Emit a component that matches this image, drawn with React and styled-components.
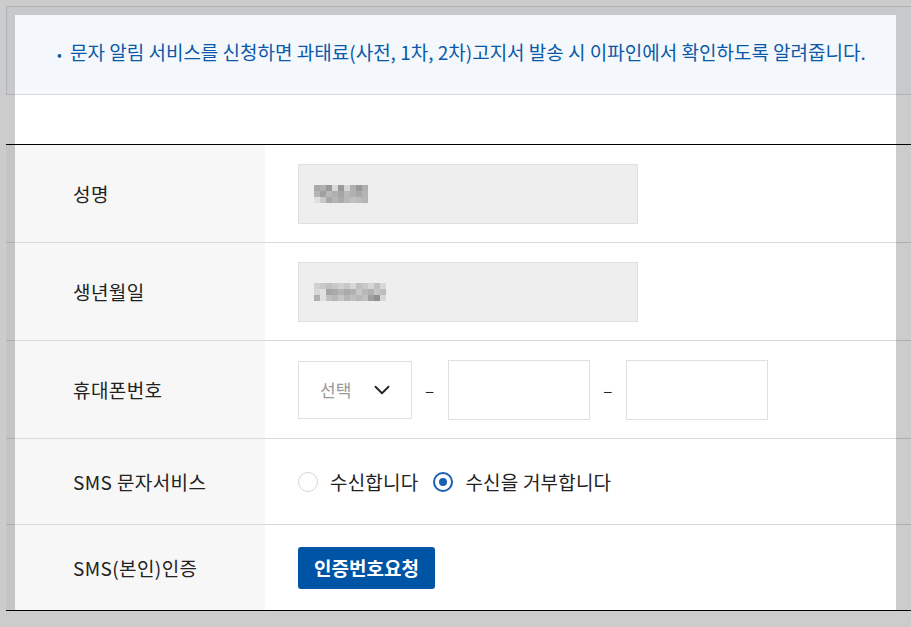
import React from "react";
import styled, { createGlobalStyle } from "styled-components";
import { ChevronDown } from "lucide-react";

const Global = createGlobalStyle`
  html, body { margin: 0; padding: 0; }
  body {
    background: #cccccc;
    overflow: hidden;
    font-family: "Noto Sans CJK KR", "Noto Sans", sans-serif;
    color: #222;
  }
`;

const Page = styled.div`
  position: relative;
  width: 911px;
  height: 627px;
  padding: 15px 0 0 15px;
  box-sizing: border-box;
`;

const Frame = styled.div`
  position: absolute;
  top: 6px;
  left: 6px;
  width: 940px;
  height: 89px;
  box-sizing: border-box;
  border: 1px solid rgba(0, 20, 60, 0.13);
  border-right: none;
  background: rgba(0, 40, 100, 0.015);
  pointer-events: none;
`;

const Card = styled.div`
  width: 881px;
  background: #fff;
`;

const InfoBox = styled.div`
  height: 80px;
  box-sizing: border-box;
  background: #f8fbff;
  display: flex;
  align-items: center;
  padding: 0 0 8px 42px;
`;

const InfoText = styled.p`
  margin: 0;
  font-size: 19px;
  color: #0a5aa9;
  letter-spacing: 0;
  white-space: nowrap;
  &::before {
    content: "•";
    display: inline-block;
    width: 13px;
    font-size: 14px;
  }
`;

const Table = styled.div`
  margin: 49px -30px 0 -9px;
  border-top: 1px solid #000;
`;

const Row = styled.div`
  display: grid;
  grid-template-columns: 259px 1fr;
  height: ${(p) => p.$h}px;
  border-bottom: 1px solid ${(p) => (p.$last ? "#000" : "rgba(0,0,0,0.15)")};
`;

const Label = styled.div`
  background: rgba(0, 0, 0, 0.03);
  display: flex;
  align-items: center;
  padding-left: 67px;
  font-size: 19px;
  letter-spacing: 0.4px;
  color: #222;
`;

const Cell = styled.div`
  display: flex;
  align-items: center;
  padding-left: 33px;
`;

const ReadField = styled.div`
  width: 340px;
  height: 60px;
  box-sizing: border-box;
  background: #eeeeee;
  border: 1px solid #e0e0e0;
  display: flex;
  align-items: center;
  padding-left: 15px;
`;

const Select = styled.div`
  width: 114px;
  height: 58px;
  box-sizing: border-box;
  border: 1px solid #e0e0e0;
  display: flex;
  align-items: center;
  justify-content: space-between;
  padding: 0 16px 0 21px;
  font-size: 17px;
  color: #999;
`;

const Dash = styled.span`
  font-size: 17px;
  color: #222;
  margin: 0 14px 0 13px;
`;

const TextInput = styled.div`
  width: 142px;
  height: 60px;
  box-sizing: border-box;
  border: 1px solid #e0e0e0;
  background: #fff;
`;

const RadioGroup = styled.div`
  display: flex;
  align-items: center;
`;

const RadioItem = styled.label`
  display: flex;
  align-items: center;
  font-size: 19px;
  letter-spacing: 0.2px;
  color: #222;
  margin-right: 15px;
`;

const RadioMark = styled.span`
  width: 20px;
  height: 20px;
  box-sizing: border-box;
  border-radius: 50%;
  border: ${(p) => (p.$on ? "2px solid #1a5fb0" : "1px solid #d6d6d6")};
  background: #fff;
  display: inline-flex;
  align-items: center;
  justify-content: center;
  margin-right: 12px;
  &::after {
    content: "";
    width: 8px;
    height: 8px;
    border-radius: 50%;
    background: ${(p) => (p.$on ? "#1a5fb0" : "transparent")};
  }
`;

const Button = styled.button`
  width: 137px;
  height: 42px;
  border: none;
  border-radius: 3px;
  background: #0054a6;
  color: #fff;
  font-family: inherit;
  font-size: 19px;
  font-weight: 700;
  padding: 0;
`;

const name = [
  ["#aaa", "#b0b0b0", "#999", "#d8d8d8", "#9a9a9a", "#d5d5d5", "#b0b0b0", "#999", "#b0b0b0"],
  ["#b5b5b5", "#a0a0a0", "#b8b8b8", "#b0b0b0", "#a5a5a5", "#b8b8b8", "#b0b0b0", "#a8a8a8", "#b5b5b5"],
  ["#e0e0e0", "#c8c8c8", "#a8a8a8", "#b5b5b5", "#aaa", "#b8b8b8", "#c0c0c0", "#bbb", "#b5b5b5"],
];
const birth = [
  ["#d0d0d0", "#c8c8c8", "#c0c0c0", "#c8c8c8", "#d0d0d0", "#c8c8c8", "#d8d8d8", "#c0c0c0", "#c8c8c8", "#d5d5d5", "#c0c0c0", "#d8d8d8"],
  ["#d8d8d8", "#e0e0e0", "#a5a5a5", "#aaaaaa", "#b5b5b5", "#aaaaaa", "#b0b0b0", "#c8c8c8", "#b8b8b8", "#b0b0b0", "#c5c5c5", "#bdbdbd"],
  ["#b0b0b0", "#e0e0e0", "#c0c0c0", "#b8b8b8", "#c5c5c5", "#b5b5b5", "#c0c0c0", "#b8b8b8", "#c0c0c0", "#a0a0a0", "#909090", "#d8d8d8"],
];

function Mosaic({ grid }) {
  const s = 6;
  return (
    <svg width={grid[0].length * s} height={grid.length * s} aria-hidden="true">
      {grid.map((r, y) =>
        r.map((c, x) => <rect key={`${x}-${y}`} x={x * s} y={y * s} width={s} height={s} fill={c} />)
      )}
    </svg>
  );
}

export default function App() {
  return (
    <Page>
      <Global />
      <Card>
        <InfoBox>
          <InfoText>문자 알림 서비스를 신청하면 과태료(사전, 1차, 2차)고지서 발송 시 이파인에서 확인하도록 알려줍니다.</InfoText>
        </InfoBox>
        <Table>
          <Row $h={97}>
            <Label>성명</Label>
            <Cell>
              <ReadField>
                <Mosaic grid={name} />
              </ReadField>
            </Cell>
          </Row>
          <Row $h={97}>
            <Label>생년월일</Label>
            <Cell>
              <ReadField>
                <Mosaic grid={birth} />
              </ReadField>
            </Cell>
          </Row>
          <Row $h={97}>
            <Label>휴대폰번호</Label>
            <Cell>
              <Select>
                선택
                <ChevronDown size={26} color="#222" strokeWidth={1.7} />
              </Select>
              <Dash>–</Dash>
              <TextInput />
              <Dash>–</Dash>
              <TextInput />
            </Cell>
          </Row>
          <Row $h={85}>
            <Label>SMS 문자서비스</Label>
            <Cell>
              <RadioGroup>
                <RadioItem>
                  <RadioMark />
                  수신합니다
                </RadioItem>
                <RadioItem>
                  <RadioMark $on />
                  수신을 거부합니다
                </RadioItem>
              </RadioGroup>
            </Cell>
          </Row>
          <Row $h={85} $last>
            <Label>SMS(본인)인증</Label>
            <Cell>
              <Button>인증번호요청</Button>
            </Cell>
          </Row>
        </Table>
      </Card>
      <Frame />
    </Page>
  );
}
